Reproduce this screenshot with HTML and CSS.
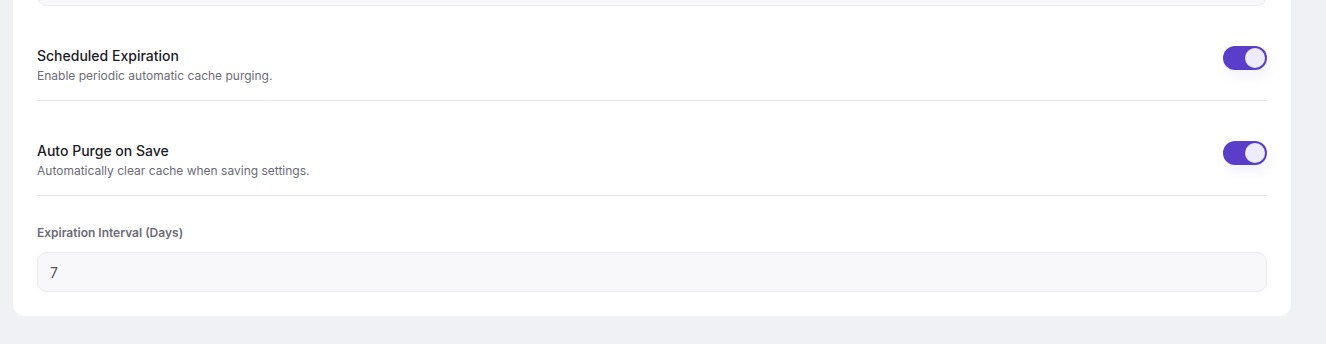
FILE: index.html
```html
<!DOCTYPE html>
<html lang="en">
<head>
<meta charset="utf-8">
<link rel="stylesheet" href="styles.css">
</head>
<body>
<div class="page">
  <section class="card">
    <div class="input prev-input"></div>
    <div class="row">
      <div class="row-text">
        <div class="row-title">Scheduled Expiration</div>
        <div class="row-desc">Enable periodic automatic cache purging.</div>
      </div>
      <div class="toggle on"><span class="knob"></span></div>
    </div>
    <div class="row">
      <div class="row-text">
        <div class="row-title">Auto Purge on Save</div>
        <div class="row-desc">Automatically clear cache when saving settings.</div>
      </div>
      <div class="toggle on"><span class="knob"></span></div>
    </div>
    <div class="field">
      <label class="field-label">Expiration Interval (Days)</label>
      <div class="input"><span class="input-value">7</span></div>
    </div>
  </section>
</div>
</body>
</html>
```

FILE: styles.css
```css
* { box-sizing: border-box; }
html, body { margin: 0; padding: 0; }
body {
  background: #f0f1f5;
  font-family: Inter, "Noto Sans", sans-serif;
  height: 344px;
  overflow: hidden;
}
.page {
  padding: 0 35px 0 13px;
}
.card {
  margin-top: -58px;
  background: #ffffff;
  border-radius: 12px;
  padding: 24px;
  display: flex;
  flex-direction: column;
  gap: 24px;
}
.input {
  height: 40px;
  background: #f8f8fa;
  border: 1px solid #eaeaef;
  border-radius: 10px;
  display: flex;
  align-items: center;
  padding: 0 12px;
}
.prev-input { height: 40px; }
.input-value {
  font-size: 14px;
  color: #55555f;
}
.row {
  display: flex;
  justify-content: space-between;
  align-items: flex-start;
  padding: 16px 0;
  border-bottom: 1px solid #e6e6ea;
}
.row-title {
  font-size: 14px;
  line-height: 20px;
  font-weight: 500;
  color: #1c1c28;
}
.row-desc {
  font-size: 12px;
  line-height: 17px;
  color: #6b6b78;
  margin-top: 1px;
}
.toggle {
  width: 44px;
  height: 24px;
  border-radius: 12px;
  background: #5a3dc8;
  position: relative;
  box-shadow: 2px 6px 12px rgba(90, 61, 200, 0.08);
}
.knob {
  position: absolute;
  top: 2px;
  left: 22px;
  width: 20px;
  height: 20px;
  border-radius: 50%;
  background: #eeebfb;
}
.field {
  padding-top: 5px;
}
.field-label {
  display: block;
  font-size: 12px;
  line-height: 16px;
  font-weight: 600;
  color: #6b6b78;
  margin-bottom: 11px;
}
```
